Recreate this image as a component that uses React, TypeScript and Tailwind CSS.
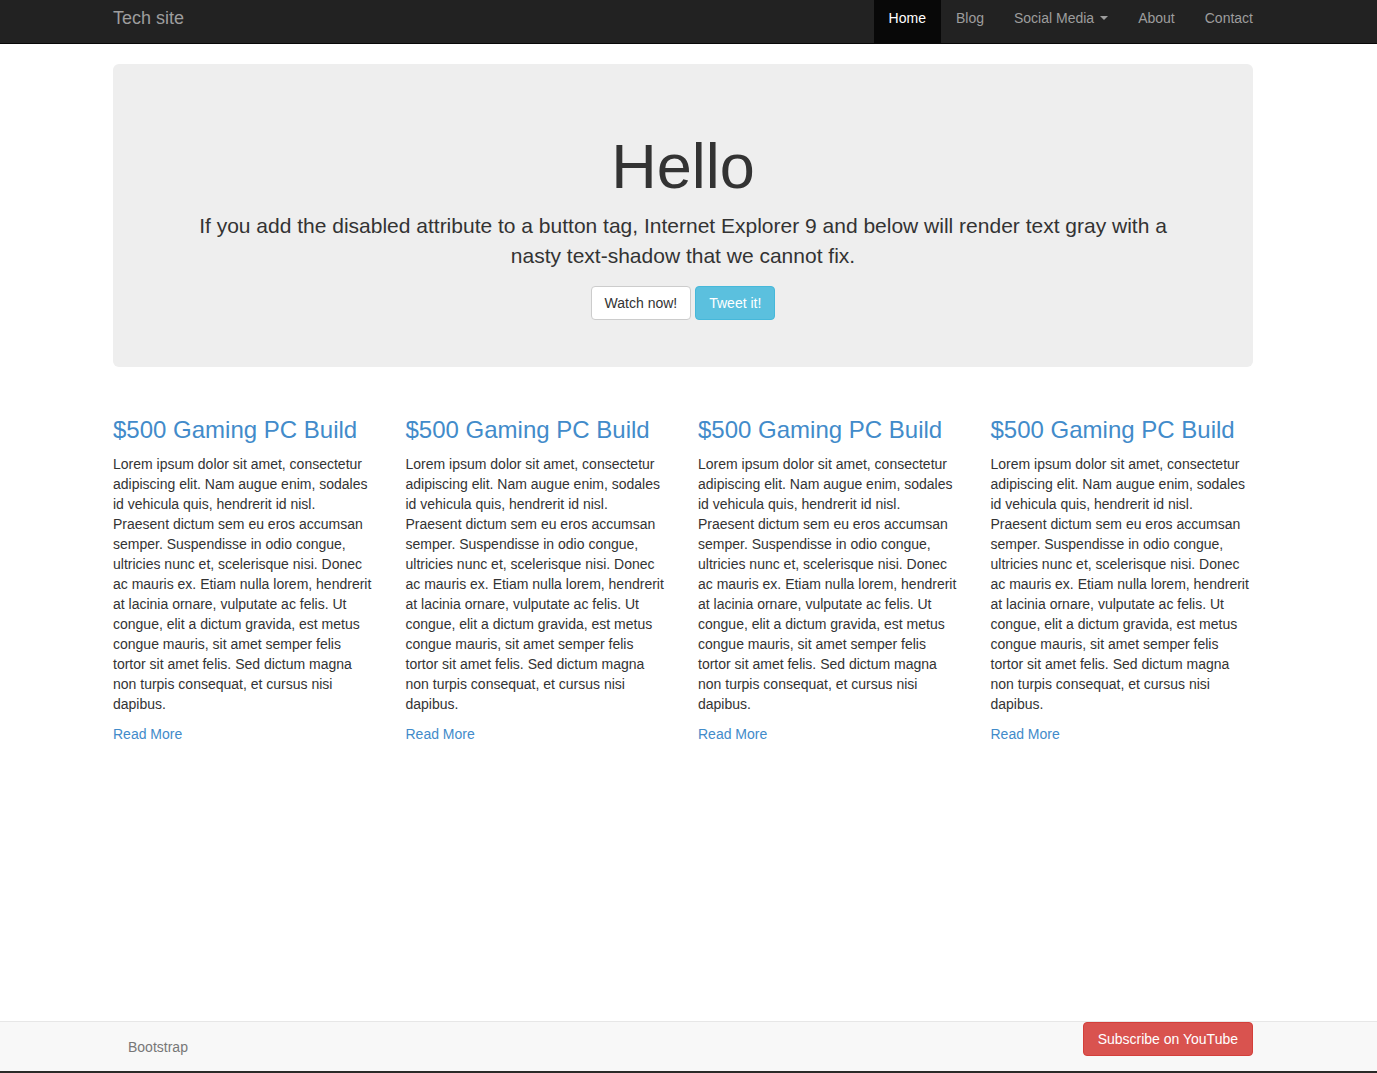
import React from "react";

const LOREM =
  "Lorem ipsum dolor sit amet, consectetur adipiscing elit. Nam augue enim, sodales id vehicula quis, hendrerit id nisl. Praesent dictum sem eu eros accumsan semper. Suspendisse in odio congue, ultricies nunc et, scelerisque nisi. Donec ac mauris ex. Etiam nulla lorem, hendrerit at lacinia ornare, vulputate ac felis. Ut congue, elit a dictum gravida, est metus congue mauris, sit amet semper felis tortor sit amet felis. Sed dictum magna non turpis consequat, et cursus nisi dapibus.";

const navLinks = ["Home", "Blog", "Social Media", "About", "Contact"];

function Navbar() {
  return (
    <nav className="h-[44px] bg-[#222] border-b border-[#080808]">
      <div className="ml-[98px] w-[1170px] px-[15px] h-full flex items-stretch justify-between">
        <a href="#" className="flex items-center text-[18px] text-[#9d9d9d] -mt-[6px]">
          Tech site
        </a>
        <ul className="flex items-stretch -mr-[15px]">
          {navLinks.map((l) => (
            <li key={l} className="flex">
              <a
                href="#"
                className={`flex items-center px-[15px] text-[14px] -mt-px ${
                  l === "Home" ? "bg-[#080808] text-white" : "text-[#9d9d9d]"
                }`}
              >
                <span className="-mt-[6px] flex items-center">
                  {l}
                  {l === "Social Media" && (
                    <span className="ml-[6px] inline-block w-0 h-0 border-t-[4px] border-t-[#9d9d9d] border-x-[4px] border-x-transparent" />
                  )}
                </span>
              </a>
            </li>
          ))}
        </ul>
      </div>
    </nav>
  );
}

function Jumbotron() {
  return (
    <div className="mt-[20px] bg-[#eee] rounded-[6px] px-[60px] pt-[48px] pb-[47px] text-center text-[#333]">
      <h1 className="mt-[20px] mb-[10px] text-[63px] leading-[1.1] font-normal">Hello</h1>
      <p className="mb-[15px] text-[21px] leading-[30px] font-normal px-[20px]">
        If you add the disabled attribute to a button tag, Internet Explorer 9 and below will render text gray
        with a nasty text-shadow that we cannot fix.
      </p>
      <div className="flex justify-center gap-[4px]">
        <button className="h-[34px] px-[13px] text-[14px] text-[#333] bg-white border border-[#ccc] rounded-[4px]">
          Watch now!
        </button>
        <button className="h-[34px] px-[13px] text-[14px] text-white bg-[#5bc0de] border border-[#46b8da] rounded-[4px]">
          Tweet it!
        </button>
      </div>
    </div>
  );
}

function Column() {
  return (
    <div>
      <h3 className="text-[24px] leading-[26.4px] text-[#428bca] font-normal mt-[20px] mb-[10px]">
        $500 Gaming PC Build
      </h3>
      <p className="w-[259px] text-[14px] leading-[20px] text-[#333] mb-[10px]">{LOREM}</p>
      <p className="text-[14px] leading-[20px]">
        <a href="#" className="text-[#428bca]">
          Read More
        </a>
      </p>
    </div>
  );
}

function Footer() {
  return (
    <footer className="h-[52px] bg-[#f8f8f8] border-t border-[#e7e7e7] border-b-2 border-b-[#2a2a28]">
      <div className="ml-[98px] w-[1170px] px-[15px] h-full flex justify-between items-start">
        <span className="ml-[15px] mt-[15px] text-[14px] leading-[20px] text-[#777]">Bootstrap</span>
        <button className="h-[34px] px-[14px] text-[14px] text-white bg-[#d9534f] border border-[#d43f3a] rounded-[4px]">
          Subscribe on YouTube
        </button>
      </div>
    </footer>
  );
}

export default function App() {
  return (
    <div
      className="min-h-screen flex flex-col bg-white"
      style={{ fontFamily: '"Liberation Sans", Arial, sans-serif' }}
    >
      <Navbar />
      <main className="flex-1">
        <div className="ml-[98px] w-[1170px] px-[15px]">
          <Jumbotron />
          <div className="grid grid-cols-4 gap-x-[30px] mt-[30px]">
            <Column />
            <Column />
            <Column />
            <Column />
          </div>
        </div>
      </main>
      <Footer />
    </div>
  );
}
